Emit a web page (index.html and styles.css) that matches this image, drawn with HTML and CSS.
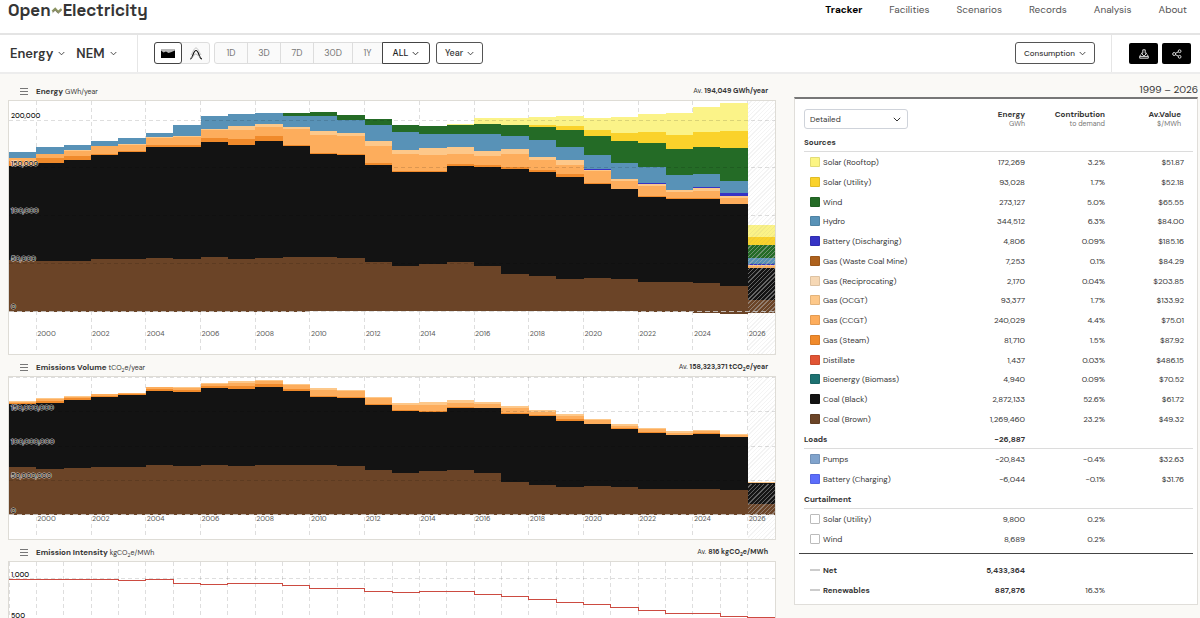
FILE: index.html
```html
<!DOCTYPE html>
<html lang="en">
<head>
<meta charset="utf-8">
<meta name="viewport" content="width=device-width, initial-scale=1">
<title>Open Electricity</title>
<link rel="stylesheet" href="styles.css">
</head>
<body>
<div class="page">
  <header class="site-header">
    <a class="logo" href="#">Open<svg class="logo-mark" viewBox="0 0 10 8" aria-hidden="true"><path d="M.8 4.8 3.4 2.4 6 5.2 9 2.6" fill="none" stroke="#8b9360" stroke-width="1.8"/><path d="M1 6 3.4 3.8 6 6.6 9.2 3.8" fill="none" stroke="#4c4a36" stroke-width=".5"/></svg>Electricity</a>
    <nav class="nav">
      <a class="current" href="#">Tracker</a>
      <a href="#">Facilities</a>
      <a href="#">Scenarios</a>
      <a href="#">Records</a>
      <a href="#">Analysis</a>
      <a href="#">About</a>
    </nav>
  </header>

  <div class="toolbar">
    <div class="scope">
      <button type="button">Energy <svg class="chev" viewBox="0 0 8 5"><path d="M.8.8 4 4 7.2.8"/></svg></button>
      <button type="button">NEM <svg class="chev" viewBox="0 0 8 5"><path d="M.8.8 4 4 7.2.8"/></svg></button>
    </div>
    <div class="group modes">
      <button type="button" class="on" aria-label="Stacked area"><svg viewBox="0 0 14 11" width="14" height="11"><path d="M0 1h14v5H0z" fill="#b9b9b9"/><path d="M0 2.500 2.500 4.500 5 3.500 7.500 5 10.500 4 14 2.500V10H0z" fill="#000"/></svg></button>
      <button type="button" aria-label="Time of day"><svg viewBox="0 0 14 13" width="14" height="13" fill="none"><path d="M2 8C4 5 5 1 7 1s3 4 5 7" stroke="#c4c4c4"/><path d="M1 12c3 0 3-8.500 6-8.500S10 12 13 12" stroke="#111" stroke-width="1.200"/><path d="M1 11.500C4 11 5 7 6.500 7S9 9 12 10" stroke="#999" stroke-width=".8"/></svg></button>
    </div>
    <div class="group ranges">
      <button type="button">1D</button>
      <button type="button">3D</button>
      <button type="button">7D</button>
      <button type="button">30D</button>
      <button type="button">1Y</button>
      <button type="button" class="on">ALL <svg class="chev" viewBox="0 0 8 5"><path d="M.8.8 4 4 7.2.8"/></svg></button>
    </div>
    <button type="button" class="outline">Year <svg class="chev" viewBox="0 0 8 5"><path d="M.8.8 4 4 7.2.8"/></svg></button>
    <button type="button" class="outline push">Consumption <svg class="chev" viewBox="0 0 8 5"><path d="M.8.8 4 4 7.2.8"/></svg></button>
    <div class="actions">
      <button type="button" aria-label="Download"><svg viewBox="0 0 10 10" width="10" height="10"><path d="M3.800.8h2.400v3.400h1.500L5 7.200 2.300 4.200h1.500zM2.200 5.800H1.600L.7 7.500v1.700h8.600V7.500L8.400 5.800H7.800M.7 7.600h8.600"/></svg></button>
      <button type="button" aria-label="Share"><svg viewBox="0 0 10 10" width="10" height="10"><circle cx="2.200" cy="5" r="1.500"/><circle cx="7.600" cy="2.200" r="1.400"/><circle cx="7.600" cy="7.800" r="1.400"/><path d="m3.500 4.300 2.900-1.500M3.500 5.700l2.900 1.500"/></svg></button>
    </div>
  </div>

  <main class="content">
    <div class="charts">
      <section>
        <div class="chart-head">
          <button type="button" class="menu" aria-label="Energy options"></button>
          <h2>Energy <small>GWh/year</small></h2>
          <p>Av. <b>194,049 GWh/year</b></p>
        </div>
        <div class="chart chart-energy" id="energy"></div>
      </section>
      <section>
        <div class="chart-head">
          <button type="button" class="menu" aria-label="Emissions options"></button>
          <h2>Emissions Volume <small>tCO<sub>2</sub>e/year</small></h2>
          <p>Av. <b>158,323,371 tCO<sub>2</sub>e/year</b></p>
        </div>
        <div class="chart chart-emissions" id="emissions"></div>
      </section>
      <section>
        <div class="chart-head">
          <button type="button" class="menu" aria-label="Intensity options"></button>
          <h2>Emission Intensity <small>kgCO<sub>2</sub>e/MWh</small></h2>
          <p>Av. <b>816 kgCO<sub>2</sub>e/MWh</b></p>
        </div>
        <div class="chart chart-intensity" id="intensity"></div>
      </section>
    </div>

    <aside class="side">
      <p class="period">1999 – 2026</p>
      <div class="panel">
        <table>
          <thead>
            <tr>
              <th><select aria-label="Grouping"><option>Detailed</option></select></th>
              <th>Energy<small>GWh</small></th>
              <th>Contribution<small>to demand</small></th>
              <th class="value-head">Av.Value<small>$/MWh</small></th>
            </tr>
          </thead>
          <tbody>
            <tr class="section first"><th>Sources</th><td></td><td></td><td></td></tr>
            <tr><td><label><input type="checkbox" checked class="c-rooftop">Solar (Rooftop)</label></td><td>172,269</td><td>3.2%</td><td>$51.87</td></tr>
            <tr><td><label><input type="checkbox" checked class="c-utility">Solar (Utility)</label></td><td>93,028</td><td>1.7%</td><td>$52.18</td></tr>
            <tr><td><label><input type="checkbox" checked class="c-wind">Wind</label></td><td>273,127</td><td>5.0%</td><td>$65.55</td></tr>
            <tr><td><label><input type="checkbox" checked class="c-hydro">Hydro</label></td><td>344,512</td><td>6.3%</td><td>$84.00</td></tr>
            <tr><td><label><input type="checkbox" checked class="c-battery">Battery (Discharging)</label></td><td>4,806</td><td>0.09%</td><td>$185.16</td></tr>
            <tr><td><label><input type="checkbox" checked class="c-waste">Gas (Waste Coal Mine)</label></td><td>7,253</td><td>0.1%</td><td>$84.29</td></tr>
            <tr><td><label><input type="checkbox" checked class="c-recip">Gas (Reciprocating)</label></td><td>2,170</td><td>0.04%</td><td>$203.85</td></tr>
            <tr><td><label><input type="checkbox" checked class="c-ocgt">Gas (OCGT)</label></td><td>93,377</td><td>1.7%</td><td>$133.92</td></tr>
            <tr><td><label><input type="checkbox" checked class="c-ccgt">Gas (CCGT)</label></td><td>240,029</td><td>4.4%</td><td>$75.01</td></tr>
            <tr><td><label><input type="checkbox" checked class="c-steam">Gas (Steam)</label></td><td>81,710</td><td>1.5%</td><td>$87.92</td></tr>
            <tr><td><label><input type="checkbox" checked class="c-distillate">Distillate</label></td><td>1,437</td><td>0.03%</td><td>$486.15</td></tr>
            <tr><td><label><input type="checkbox" checked class="c-biomass">Bioenergy (Biomass)</label></td><td>4,940</td><td>0.09%</td><td>$70.52</td></tr>
            <tr><td><label><input type="checkbox" checked class="c-black">Coal (Black)</label></td><td>2,872,133</td><td>52.6%</td><td>$61.72</td></tr>
            <tr><td><label><input type="checkbox" checked class="c-brown">Coal (Brown)</label></td><td>1,269,460</td><td>23.2%</td><td>$49.32</td></tr>
          </tbody>
          <tbody>
            <tr class="section"><th>Loads</th><td><b>−26,887</b></td><td></td><td></td></tr>
            <tr><td><label><input type="checkbox" checked class="c-pumps">Pumps</label></td><td>−20,843</td><td>−0.4%</td><td>$32.63</td></tr>
            <tr><td><label><input type="checkbox" checked class="c-charging">Battery (Charging)</label></td><td>−6,044</td><td>−0.1%</td><td>$31.76</td></tr>
          </tbody>
          <tbody>
            <tr class="section"><th>Curtailment</th><td></td><td></td><td></td></tr>
            <tr><td><label><input type="checkbox">Solar (Utility)</label></td><td>9,800</td><td>0.2%</td><td></td></tr>
            <tr><td><label><input type="checkbox">Wind</label></td><td>8,689</td><td>0.2%</td><td></td></tr>
          </tbody>
        </table>
        <table class="totals">
          <tbody>
            <tr><th><span class="dash"></span>Net</th><td><b>5,433,364</b></td><td></td><td></td></tr>
            <tr><th><span class="dash"></span>Renewables</th><td><b>887,876</b></td><td>16.3%</td><td></td></tr>
          </tbody>
        </table>
      </div>
    </aside>
  </main>
</div>
<script src="charts.js"></script>
</body>
</html>
```
FILE: styles.css
```css
* { box-sizing: border-box; }
body {
  margin: 0;
  background: #faf9f6;
  color: #353535;
  font-family: "DM Sans", Inter, "Liberation Sans", sans-serif;
  font-optical-sizing: none;
  font-size: 8px;
  line-height: 12px;
}
h2, p { margin: 0; }
a { color: inherit; text-decoration: none; }
button { font: inherit; font-optical-sizing: none; color: inherit; border: 0; background: none; padding: 0; cursor: pointer; }
.page { height: 100vh; overflow: hidden; }

.site-header {
  display: flex;
  justify-content: space-between;
  align-items: flex-start;
  height: 35px;
  padding: 0 13px 0 8px;
  background: #fff;
  border-bottom: 2px solid #e4e4e4;
}
.logo {
  display: flex;
  align-items: center;
  font-family: "Space Grotesk", "DM Sans", Inter, sans-serif;
  font-size: 17px;
  line-height: 20px;
  font-weight: 700;
}
.logo-mark { width: 12px; height: 9px; }
.nav { display: flex; gap: 27px; font-size: 10px; line-height: 19px; color: #555; }
.nav .current { color: #000; font-weight: 700; }

.toolbar {
  display: flex;
  align-items: center;
  height: 39px;
  padding-bottom: 1px;
  background: #fff;
  border-bottom: 2px solid #ededed;
}
.toolbar button { display: flex; align-items: center; justify-content: center; }
.chev { width: 7px; height: 5px; fill: none; stroke: currentColor; stroke-width: 1; }
.scope {
  display: flex;
  align-self: stretch;
  gap: 11px;
  width: 138px;
  margin-bottom: -1px;
  padding-left: 10px;
  border-right: 1px solid #e6e6e6;
  font-size: 13px;
  font-weight: 600;
}
.scope button { gap: 5px; }
.group { display: flex; height: 22px; border: 1px solid #ddd; border-radius: 3px; background: #fafafa; }
.group button { margin: -1px 0; }
.group .on { border: 1px solid #444; background: #fff; color: #222; }
.modes { margin-left: 16px; }
.modes button { width: 27px; }
.modes .on { width: 28px; margin-left: -1px; border-radius: 3px; }
.ranges { margin-left: 4px; font-size: 9px; color: #777; }
.ranges button { width: 33px; border-right: 1px solid #ddd; }
.ranges button:nth-child(4) { width: 39px; }
.ranges button:nth-child(5) { width: 29px; border-right: 0; }
.ranges .on { width: 48px; margin-right: -1px; gap: 4px; border-radius: 0 3px 3px 0; font-weight: 500; }
.outline {
  gap: 4px;
  height: 22px;
  margin-left: 6px;
  padding: 0 8px;
  border: 1px solid #555;
  border-radius: 3px;
  font-size: 9px;
  font-weight: 500;
}
.toolbar .push { margin-left: auto; margin-right: 16px; font-size: 8px; }
.actions {
  display: flex;
  align-self: stretch;
  align-items: center;
  gap: 4px;
  margin-bottom: -1px;
  padding: 0 9px 0 17px;
  border-left: 1px solid #e6e6e6;
}
.actions button { width: 29px; height: 21px; background: #000; border-radius: 2px; }
.actions svg { fill: none; stroke: #ddd; stroke-width: 1; }

.content {
  display: grid;
  grid-template-columns: minmax(0, 1fr) 404px;
  gap: 18px;
  padding: 5px 2px 0 8px;
}
.chart-head { display: flex; align-items: center; height: 21px; padding: 3px 8px 0 12px; }
.menu {
  width: 8px;
  height: 7px;
  margin-right: 8px;
  border-top: 1px solid #777;
  border-bottom: 1px solid #777;
  background: linear-gradient(#777, #777) center / 100% 1px no-repeat;
}
.chart-head h2 { font-size: 8px; line-height: 12px; font-weight: 700; }
.chart-head small { font-size: 7px; font-weight: 400; }
.chart-head p { margin-left: auto; font-size: 7px; font-optical-sizing: auto; }
.chart-head sub { font-size: 5px; line-height: 0; }

.chart { position: relative; border: 1px solid #dedcd6; background: #fff; }
.chart svg { display: block; width: 100%; height: 100%; }
.chart-energy { height: 255px; }
.chart-emissions { height: 164px; }
.chart-intensity { height: 152px; }
.chart path { shape-rendering: crispEdges; }
.grid { fill: none; stroke: rgba(0, 0, 0, .13); stroke-width: 1; stroke-dasharray: 4 3; vector-effect: non-scaling-stroke; }
.zero { fill: none; stroke: rgba(215, 215, 215, .8); stroke-width: 1; stroke-dasharray: 5 3; vector-effect: non-scaling-stroke; }
.trace { fill: none; stroke: #cc4b41; stroke-width: 1; vector-effect: non-scaling-stroke; }
.tick { position: absolute; font-size: 7px; line-height: 10px; white-space: nowrap; font-optical-sizing: auto; }
.tick-x { margin: -5px 0 0 1px; color: #555; }
.tick-y {
  left: 2px;
  margin-top: -9px;
  color: #111;
  font-weight: 500;
  -webkit-text-stroke: 1px rgba(255, 255, 255, .8);
  paint-order: stroke fill;
}
.hatch { position: absolute; right: 0; width: calc(100% / 28); }
.hatch-light { top: 0; bottom: 0; background: repeating-linear-gradient(135deg, transparent 0 2px, rgba(130, 130, 130, .09) 2px 3px); }
.hatch-dark { background: repeating-linear-gradient(135deg, transparent 0 2px, rgba(190, 190, 190, .45) 2px 3px); }

.period { height: 18px; padding-top: 4px; font-size: 10px; font-optical-sizing: auto; line-height: 13px; text-align: right; }
.panel { background: #fff; border: 1px solid #e0deda; border-top: 2px solid #777; padding: 10px 4px 4px; }
table { width: 100%; border-collapse: collapse; table-layout: fixed; }
th, td { padding: 0; text-align: right; font-weight: 400; white-space: nowrap; }
th:first-child, td:first-child { width: 226px; padding-left: 5px; text-align: left; }
th:nth-child(2), td:nth-child(2) { width: auto; }
th:nth-child(3), td:nth-child(3) { width: 80px; }
th:last-child, td:last-child { width: 88px; padding-right: 9px; }
.panel th:first-child, .panel td:first-child { width: 38%; }
thead th { height: 23px; vertical-align: top; font-weight: 700; line-height: 10px; }
thead th.value-head { padding-right: 12px; }
thead small { display: block; font-size: 7px; line-height: 10px; font-weight: 400; color: #777; }
select {
  display: block;
  width: 104px;
  height: 20px;
  padding: 0 5px;
  border: 1px solid #cfd3da;
  border-radius: 3px;
  appearance: none;
  background: #fff url("data:image/svg+xml,%3Csvg xmlns='http://www.w3.org/2000/svg' viewBox='0 0 8 5'%3E%3Cpath d='M.8.8 4 4 7.200.8' fill='none' stroke='%23333'/%3E%3C/svg%3E") right 6px center / 8px 5px no-repeat;
  color: #353535;
  font: inherit;
  font-weight: 400;
  font-optical-sizing: none;
}
tbody tr { height: 20px; }
tbody:first-of-type tr:nth-child(4n) { height: 19px; }
.section th, .totals th { font-weight: 700; }
.section th:first-child { padding-left: 5px; }
tbody td:first-child, .totals th:first-child { padding-left: 11px; }
.section th, .section td {
  background: linear-gradient(#dcdcdc, #dcdcdc) bottom / 100% 1px no-repeat;
}
.section th:first-child { background-position: 5px bottom; }
label { display: flex; align-items: center; gap: 3px; }
input {
  appearance: none;
  width: 10px;
  height: 10px;
  margin: 0;
  border: 1px solid #bbb;
  border-radius: 1px;
  background: #fff;
}
input:checked { border-color: rgba(0, 0, 0, .1); }
.c-rooftop { background: #fcf584; }
.c-utility { background: #fad22b; }
.c-wind { background: #246b26; }
.c-hydro { background: #5892b7; }
.c-battery { background: #3633c5; }
.c-waste { background: #ad611d; }
.c-recip { background: #f6d8b5; }
.c-ocgt { background: #fdc88a; }
.c-ccgt { background: #fdad5c; }
.c-steam { background: #f08a2b; }
.c-distillate { background: #e15434; }
.c-biomass { background: #1d7171; }
.c-black { background: #131313; }
.c-brown { background: #6b4427; }
.c-pumps { background: #80a3cc; }
.c-charging { background: #5b6dfb; }
.totals { margin-top: 4px; border-top: 1px solid #444; border-collapse: separate; border-spacing: 0; padding-top: 6px; }
.dash { display: inline-block; width: 10px; height: 2px; margin-right: 3px; vertical-align: 2px; background: #ccc; }
```
FILE: charts.js
```js
const COUNT = 28;
const FIRST_YEAR = 1999;
const COLORS = {
  rooftop: '#fbf388', utility: '#fad22b', wind: '#246b26', hydro: '#5892b7', battery: '#3633c5',
  ocgt: '#fdc88a', ccgt: '#fdad5c', steam: '#f08a2b', black: '#131313', brown: '#6b4427'
};

/* Stacked tops per year; each layer is painted over the one before it. */
const energy = {
  top: 18, height: 759, base: 648, xLabel: 716, gridEnd: 765,
  bottoms: [650,650,650,650,650,652,650,650,652,652,650,649,649,649,649,649,649,649,649,649,649,649,649,651,651,655,658,653],
  ticks: [['200,000', 76], ['150,000', 218], ['100,000', 361], ['50,000', 504], ['0', 648]],
  hatch: [450, 653],
  layers: [
    ['rooftop', [171,156,149,138,129,114,89,63,57,54,53,51,60,73,89,94,86,69,68,66,63,68,66,56,53,36,23,390]],
    ['utility', [171,156,149,138,129,114,89,63,57,54,53,51,60,73,89,94,89,86,89,90,92,105,114,110,120,110,107,425]],
    ['wind', [171,156,149,138,129,114,89,63,57,54,53,51,60,73,89,94,89,86,91,95,106,124,138,143,161,156,159,450]],
    ['hydro', [171,156,149,138,129,114,89,63,57,54,63,64,75,91,111,118,116,117,123,135,155,181,203,216,239,236,258,490]],
    ['battery', [189,177,166,152,147,127,122,102,93,87,97,108,115,138,165,160,157,168,161,185,195,223,251,265,285,276,295,507]],
    ['ocgt', [189,177,166,152,147,127,122,102,93,87,97,108,115,138,165,160,157,168,161,186,196,224,252,266,286,278,302,511]],
    ['ccgt', [190,178,168,154,149,129,126,104,105,97,101,120,124,152,176,180,177,182,178,195,209,229,257,272,292,287,308,514]],
    ['steam', [197,190,183,176,168,150,150,130,133,123,149,174,177,204,227,229,208,211,217,226,237,263,281,302,310,309,326,518]],
    ['black', [214,204,195,181,171,155,155,140,150,138,153,177,181,209,231,232,214,215,223,231,247,266,283,305,313,312,328,519]],
    ['brown', [496,499,497,493,493,489,491,487,493,489,486,486,490,501,512,507,502,514,538,544,552,550,552,560,560,564,574,615]]
  ]
};

const emissions = {
  top: 66, height: 486, base: 479, xLabel: 493, gridEnd: 541,
  bottoms: Array(COUNT).fill(480),
  ticks: [['', 67], ['150,000,000', 170], ['100,000,000', 273], ['50,000,000', 376], ['0', 479]],
  hatch: [386, 480],
  layers: [
    ['ocgt', [138,130,124,116,113,96,97,85,79,75,86,99,105,125,145,142,136,142,154,166,178,193,208,219,229,224,236,381]],
    ['ccgt', [140,132,125,117,114,97,98,87,83,78,89,104,109,130,150,149,143,148,159,170,183,196,212,223,233,229,240,383]],
    ['steam', [143,137,130,123,118,103,104,94,93,87,103,122,126,148,166,168,155,158,174,181,192,206,219,231,239,235,246,384]],
    ['black', [147,143,135,127,121,107,110,99,101,96,107,125,128,151,168,170,158,160,177,184,197,208,221,233,240,236,247,385]],
    ['brown', [337,341,339,336,335,330,333,331,332,330,329,331,333,345,353,349,346,355,382,390,397,394,397,401,402,402,405,447]]
  ]
};

const intensity = {
  top: 621, height: 450, xLabel: null, gridEnd: 1071, everyYear: true,
  ticks: [['1,000', 671], ['500', 795]],
  trace: [673,674,674,674,676,673,684,687,686,685,691,701,699,708,713,710,710,718,724,733,741,748,757,766,774,774,785,787]
};

function steps(values) {
  return values.map((y, i) => `V${y}H${i + 1}`).join('');
}

function area(tops, bottoms) {
  const back = [...bottoms].map((y, i) => [y, i]).reverse().map(([y, i]) => `V${y}H${i}`).join('');
  return `M0 ${tops[0]}${steps(tops)}${back}Z`;
}

function draw(id, c) {
  const pct = y => ((y - c.top) / c.height * 100).toFixed(3);
  let svg = '';
  let labels = '';
  if (c.hatch) {
    labels += '<span class="hatch hatch-light"></span>';
    labels += `<span class="hatch hatch-dark" style="top:${pct(c.hatch[0])}%;height:${((c.hatch[1] - c.hatch[0]) / c.height * 100).toFixed(3)}%"></span>`;
  }
  for (let i = c.everyYear ? 0 : 1; i < COUNT; i += c.everyYear ? 1 : 2) {
    svg += `<path class="grid" d="M${i} ${c.top}V${c.gridEnd}"/>`;
    if (c.xLabel) {
      labels += `<span class="tick tick-x" style="left:${(i / COUNT * 100).toFixed(3)}%;top:${pct(c.xLabel)}%">${FIRST_YEAR + i}</span>`;
    }
  }
  (c.layers || []).forEach(([name, tops]) => {
    svg += `<path fill="${COLORS[name]}" d="${area(tops, c.bottoms)}"/>`;
  });
  c.ticks.forEach(([text, y]) => {
    svg += `<path class="${y === c.base ? 'zero' : 'grid'}" d="M0 ${y}H${COUNT}"/>`;
    labels += `<span class="tick tick-y" style="top:${pct(y)}%">${text}</span>`;
  });
  if (c.trace) {
    svg += `<path class="trace" d="M0 ${c.trace[0]}${steps(c.trace)}"/>`;
  }
  document.getElementById(id).innerHTML =
    `<svg viewBox="0 ${c.top} ${COUNT} ${c.height}" preserveAspectRatio="none" aria-hidden="true">${svg}</svg>${labels}`;
}

draw('energy', energy);
draw('emissions', emissions);
draw('intensity', intensity);
```
